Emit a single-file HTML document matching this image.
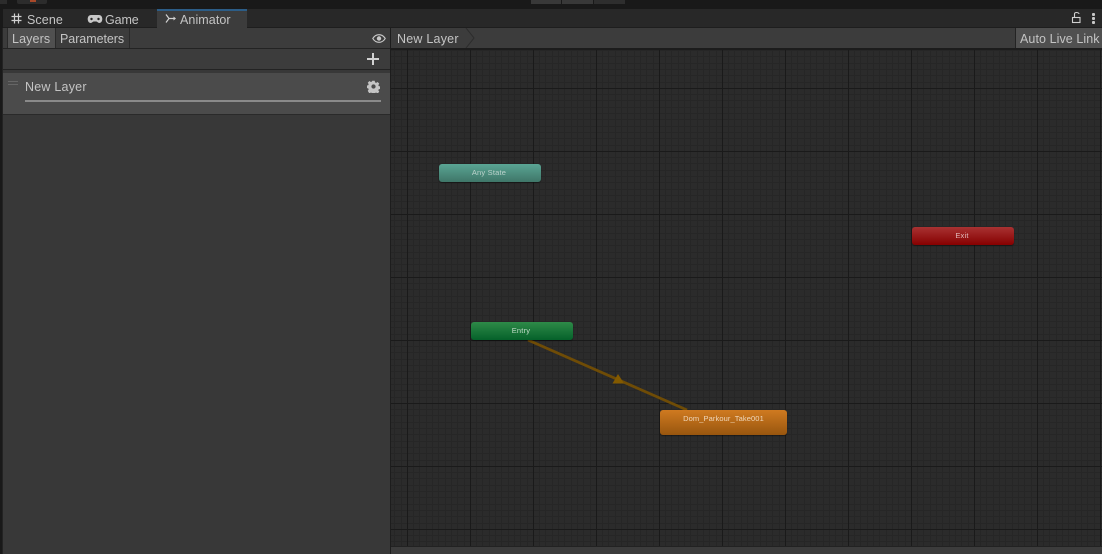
<!DOCTYPE html>
<html>
<head>
<meta charset="utf-8">
<style>
html,body{margin:0;padding:0;width:1102px;height:554px;overflow:hidden;background:#191919}
body{position:relative;font-family:"Liberation Sans",sans-serif;color:#c4c4c4;font-size:12.5px}
.a{position:absolute}
.t{position:absolute;white-space:nowrap;line-height:16px;letter-spacing:.12px}
.node{position:absolute;border-radius:3px;box-sizing:border-box;text-align:center;font-size:7.5px;letter-spacing:.2px;padding-right:2px;box-shadow:0 1px 1px rgba(0,0,0,.4)}
</style>
</head>
<body>
<!-- top strip -->
<div class="a" style="left:0;top:0;width:1102px;height:9px;background:#191919"></div>
<div class="a" style="left:0;top:0;width:7px;height:4px;background:#2c2c2c"></div>
<div class="a" style="left:17px;top:0;width:30px;height:4px;background:#2c2c2c;border-radius:0 0 2px 2px"></div>
<div class="a" style="left:30px;top:0;width:6px;height:2px;background:#a8492a"></div>
<div class="a" style="left:531px;top:0;width:30px;height:4px;background:#383838"></div>
<div class="a" style="left:562px;top:0;width:31px;height:4px;background:#383838"></div>
<div class="a" style="left:594px;top:0;width:31px;height:4px;background:#2e2e2e"></div>

<!-- tab bar -->
<div class="a" style="left:3px;top:9px;width:1099px;height:18px;background:#282828"></div>
<div class="a" style="left:3px;top:27px;width:1099px;height:1px;background:#1e1e1e"></div>
<div class="a" style="left:157px;top:9px;width:90px;height:19px;background:#3c3c3c"></div>
<div class="a" style="left:157px;top:9px;width:90px;height:2px;background:#2c5d87"></div>

<svg class="a" style="left:11px;top:13px" width="12" height="12" viewBox="0 0 12 12" fill="none" stroke="#d0d0d0" stroke-width="1.200">
<path d="M3.500 .5v10M7.500 .5v10M.5 3.500h10M.5 7.500h10"/></svg>
<div class="t" style="left:27px;top:12px;letter-spacing:.1px">Scene</div>
<svg class="a" style="left:87px;top:14px" width="16" height="10" viewBox="0 0 16 10">
<path fill="#c8c8c8" d="M4 1h8c2 0 3.300 1.800 3.300 4s-1.300 4-3 4c-1.300 0-2-1.500-3-1.500h-2.600c-1 0-1.700 1.500-3 1.500-1.700 0-3-1.800-3-4s1.300-4 3.300-4z"/>
<circle cx="4.500" cy="5" r="1.200" fill="#282828"/><circle cx="11.500" cy="5" r="1.200" fill="#282828"/></svg>
<div class="t" style="left:105px;top:12px;letter-spacing:-.1px">Game</div>
<svg class="a" style="left:165px;top:13px" width="12" height="11" viewBox="0 0 12 11" fill="none" stroke="#d0d0d0" stroke-width="1.200">
<path d="M1 1.500 L4 5.500 L1 9.500M4 5.500H10"/><path d="M8.500 3.500L11 5.500L8.500 7.500z" fill="#d0d0d0" stroke="none"/></svg>
<div class="t" style="left:180px;top:12px;letter-spacing:.08px">Animator</div>

<!-- lock & menu -->
<svg class="a" style="left:1071px;top:11px" width="12" height="13" viewBox="0 0 12 13" fill="none" stroke="#d0d0d0" stroke-width="1.100">
<path d="M3.500 6V3C3.500 2 4.500 1.500 5.500 1.500S8 2 8 3"/><rect x="1.500" y="6.500" width="7.500" height="5"/></svg>
<div class="a" style="left:1092px;top:13px;width:3px;height:3px;background:#c8c8c8;border-radius:1px"></div>
<div class="a" style="left:1092px;top:17px;width:3px;height:3px;background:#c8c8c8;border-radius:1px"></div>
<div class="a" style="left:1092px;top:21px;width:3px;height:3px;background:#c8c8c8;border-radius:1px"></div>

<!-- left panel -->
<div class="a" style="left:3px;top:28px;width:387px;height:526px;background:#383838"></div>
<div class="a" style="left:2px;top:28px;width:1px;height:526px;background:#232323"></div>
<div class="a" style="left:3px;top:28px;width:387px;height:20px;background:#3c3c3c"></div>
<div class="a" style="left:3px;top:48px;width:387px;height:1px;background:#232323"></div>
<div class="a" style="left:8px;top:28px;width:47px;height:20px;background:#505050"></div>
<div class="a" style="left:55px;top:28px;width:1px;height:20px;background:#2a2a2a"></div>
<div class="a" style="left:129px;top:28px;width:1px;height:20px;background:#2a2a2a"></div>
<div class="a" style="left:7px;top:28px;width:1px;height:20px;background:#2a2a2a"></div>
<div class="t" style="left:12px;top:31px">Layers</div>
<div class="t" style="left:60px;top:31px;letter-spacing:-.05px">Parameters</div>
<svg class="a" style="left:372px;top:33px" width="14" height="11" viewBox="0 0 14 11">
<path fill="none" stroke="#c8c8c8" stroke-width="1.200" d="M.8 5.500C2.500 2.700 4.700 1.700 7 1.700s4.500 1 6.200 3.800C11.500 8.300 9.300 9.300 7 9.300S2.500 8.300.8 5.500z"/>
<circle cx="7" cy="5.500" r="2.200" fill="#c8c8c8"/></svg>

<div class="a" style="left:3px;top:49px;width:387px;height:20px;background:#3c3c3c"></div>
<div class="a" style="left:3px;top:69px;width:387px;height:1px;background:#232323"></div>
<div class="a" style="left:367px;top:58px;width:12px;height:2px;background:#d2d2d2"></div>
<div class="a" style="left:372px;top:53px;width:2px;height:12px;background:#d2d2d2"></div>

<div class="a" style="left:3px;top:73px;width:387px;height:41px;background:#4b4b4b"></div>
<div class="a" style="left:3px;top:114px;width:387px;height:1px;background:#2a2a2a"></div>
<div class="a" style="left:8px;top:81px;width:10px;height:1px;background:#666"></div>
<div class="a" style="left:8px;top:84px;width:10px;height:1px;background:#666"></div>
<div class="t" style="left:25px;top:79px;letter-spacing:.22px">New Layer</div>
<div class="a" style="left:25px;top:100px;width:356px;height:2px;background:#8a8a8a"></div>
<svg class="a" style="left:367px;top:80px" width="13" height="13" viewBox="0 0 14 14">
<path fill="#c4c4c4" fill-rule="evenodd" d="M5.700.8h2.600l.4 1.800 1.100.5 1.600-1 1.800 1.800-1 1.600.5 1.100 1.800.4v2.600l-1.800.4-.5 1.100 1 1.600-1.800 1.800-1.600-1-1.100.5-.4 1.800H5.700l-.4-1.800-1.100-.5-1.600 1L.8 11.700l1-1.600-.5-1.100-1.800-.4V6l1.800-.4.5-1.100-1-1.600L2.600 1.100l1.600 1 1.100-.5zM7 4.700a2.300 2.300 0 1 0 0 4.600 2.300 2.300 0 0 0 0-4.600z"/></svg>

<div class="a" style="left:390px;top:28px;width:1px;height:526px;background:#1d1d1d"></div>

<!-- breadcrumb -->
<div class="a" style="left:391px;top:28px;width:711px;height:20px;background:#3c3c3c"></div>
<div class="t" style="left:397px;top:31px;letter-spacing:.22px">New Layer</div>
<svg class="a" style="left:465px;top:28px" width="12" height="20" viewBox="0 0 12 20" fill="none" stroke="#2c2c2c"><path d="M1 0L9 10L1 20"/></svg>
<div class="a" style="left:1015px;top:28px;width:1px;height:20px;background:#232323"></div>
<div class="a" style="left:1016px;top:28px;width:86px;height:20px;background:#505050"></div>
<div class="t" style="left:1020px;top:31px;letter-spacing:.08px">Auto Live Link</div>

<!-- graph -->
<svg class="a" style="left:391px;top:48px" width="711" height="498" viewBox="0 0 711 498" shape-rendering="crispEdges">
<defs>
<pattern id="g" x="16" y="40" width="63" height="63" patternUnits="userSpaceOnUse">
<path stroke="#262626" stroke-width="1" fill="none" d="M6.500 0v63M12.500 0v63M19.500 0v63M25.500 0v63M31.500 0v63M38.500 0v63M44.500 0v63M50.500 0v63M57.500 0v63M0 6.500h63M0 12.500h63M0 19.500h63M0 25.500h63M0 31.500h63M0 38.500h63M0 44.500h63M0 50.500h63M0 57.500h63"/>
<rect x="0" y="0" width="1" height="63" fill="#1a1a1a"/>
<rect x="0" y="0" width="63" height="1" fill="#1a1a1a"/>
</pattern>
</defs>
<rect width="711" height="498" fill="#2b2b2b"/>
<rect width="711" height="498" fill="url(#g)"/>
<rect width="711" height="2" fill="#1c1c1c"/>
<g shape-rendering="auto">
<path d="M137 292L296 362" stroke="#6f4c06" stroke-width="2.800" fill="none"/>
<path d="M227 326L221.500 335.500H233z" fill="#835a00"/>
</g>
</svg>

<div class="node" style="left:439px;top:164px;width:102px;height:18px;background:linear-gradient(#5aa594,#3f7668);color:#bcd2cc;line-height:18px">Any State</div>
<div class="node" style="left:912px;top:227px;width:102px;height:18px;background:linear-gradient(#a83232,#860000);color:#e0b8b8;line-height:18px">Exit</div>
<div class="node" style="left:471px;top:322px;width:102px;height:18px;background:linear-gradient(#2e8a48,#05612a);color:#c0dcc8;line-height:18px">Entry</div>
<div class="node" style="left:660px;top:410px;width:127px;height:25px;background:linear-gradient(#cf7a20,#98560f);color:#f0d8bc;line-height:18px;letter-spacing:.1px;padding-right:0">Dom_Parkour_Take001</div>

<!-- bottom bar -->
<div class="a" style="left:391px;top:546px;width:711px;height:8px;background:#3c3c3c;overflow:hidden"></div>
<div class="a" style="left:391px;top:546px;width:711px;height:1px;background:#222"></div>
<div class="a" style="left:391px;top:552px;width:711px;height:2px;overflow:hidden"><div class="t" style="left:593px;top:-1px;font-size:11px;color:#9a9a9a">Test Controller.controller</div></div>
</body>
</html>
